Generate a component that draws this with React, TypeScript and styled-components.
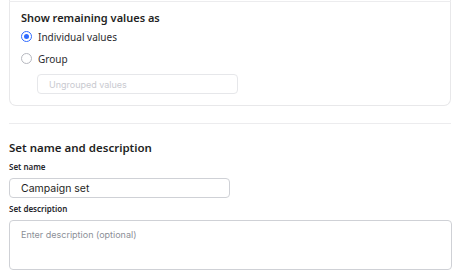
import styled, { createGlobalStyle } from 'styled-components';

const GlobalStyle = createGlobalStyle`
  * {
    box-sizing: border-box;
  }
  body {
    margin: 0;
    background: #ffffff;
    font-family: 'Noto Sans', sans-serif;
    color: #1f2937;
  }
`;

type RadioProps = {
  checked: boolean;
};

const options = [
  { id: 'individual', label: 'Individual values', checked: true },
  { id: 'group', label: 'Group', checked: false },
];

export default function App() {
  return (
    <>
      <GlobalStyle />
      <Page>
        <Card>
          <CardTitle>Show remaining values as</CardTitle>
          <RadioList>
            {options.map((option) => (
              <RadioRow key={option.id}>
                <Radio checked={option.checked} />
                <RadioLabel>{option.label}</RadioLabel>
              </RadioRow>
            ))}
          </RadioList>
          <GroupInput placeholder="Ungrouped values" disabled />
        </Card>
        <DivideLine />
        <Section>
          <SectionTitle>Set name and description</SectionTitle>
          <FieldLabel>Set name</FieldLabel>
          <NameInput defaultValue="Campaign set" />
          <FieldLabel>Set description</FieldLabel>
          <DescriptionArea placeholder="Enter description (optional)" />
        </Section>
      </Page>
    </>
  );
}

const Page = styled.div`
  width: 467px;
  height: 272px;
  overflow: hidden;
  padding: 0 16px 0 9px;
  display: flex;
  flex-direction: column;
`;

const Card = styled.div`
  width: 442px;
  height: 106px;
  border: 1px solid #e8e8ea;
  border-top: none;
  border-radius: 0 0 7px 7px;
  padding: 10px 11px 0 11px;
  display: flex;
  flex-direction: column;
  position: relative;

  &::before {
    content: '';
    position: absolute;
    left: -1px;
    right: -1px;
    top: 1px;
    height: 1px;
    background: #ececee;
  }
`;

const CardTitle = styled.div`
  font-size: 11px;
  font-weight: 600;
  color: #1f1f24;
  line-height: 16px;
`;

const RadioList = styled.div`
  display: flex;
  flex-direction: column;
  gap: 7px;
  margin-top: 3px;
`;

const RadioRow = styled.div`
  display: flex;
  align-items: center;
  gap: 6px;
  height: 15px;
`;

const Radio = styled.span<RadioProps>`
  width: 11px;
  height: 11px;
  border-radius: 50%;
  border: 1px solid ${({ checked }) => (checked ? '#2f6bff' : '#b6b8bf')};
  display: flex;
  align-items: center;
  justify-content: center;

  &::after {
    content: '';
    width: 5px;
    height: 5px;
    border-radius: 50%;
    background: ${({ checked }) => (checked ? '#2f6bff' : 'transparent')};
  }
`;

const RadioLabel = styled.span`
  font-size: 10px;
  color: #2b2b30;
`;

const GroupInput = styled.input`
  margin-top: 8px;
  margin-left: 16px;
  width: 201px;
  height: 20px;
  border: 1px solid #e6e7ea;
  border-radius: 4px;
  background: #ffffff;
  padding: 0 11px;
  font-family: Inter, sans-serif;
  font-size: 9px;
  outline: none;

  &::placeholder {
    color: #c9cad0;
  }
`;

const DivideLine = styled.hr`
  width: 442px;
  height: 1px;
  border: none;
  margin: 17px 0 0 0;
  background-color: #ececee;
`;

const Section = styled.div`
  display: flex;
  flex-direction: column;
  padding-top: 16px;
`;

const SectionTitle = styled.div`
  font-size: 11.5px;
  font-weight: 600;
  color: #1f1f24;
  line-height: 16px;
`;

const FieldLabel = styled.div`
  font-size: 8px;
  font-weight: 600;
  color: #25252a;
  line-height: 10px;
  margin-top: 6px;
`;

const NameInput = styled.input`
  margin-top: 6px;
  width: 221px;
  height: 20px;
  border: 1px solid #cfd1d6;
  border-radius: 4px;
  padding: 0 11px;
  font-family: Inter, sans-serif;
  font-size: 10.5px;
  color: #1f1f24;
  outline: none;
`;

const DescriptionArea = styled.textarea`
  margin-top: 6px;
  width: 443px;
  height: 50px;
  border: 1px solid #cfd1d6;
  border-radius: 4px;
  padding: 8px 11px;
  font-family: Inter, sans-serif;
  font-size: 9px;
  resize: none;
  outline: none;

  &::placeholder {
    color: #8c8f97;
  }
`;
